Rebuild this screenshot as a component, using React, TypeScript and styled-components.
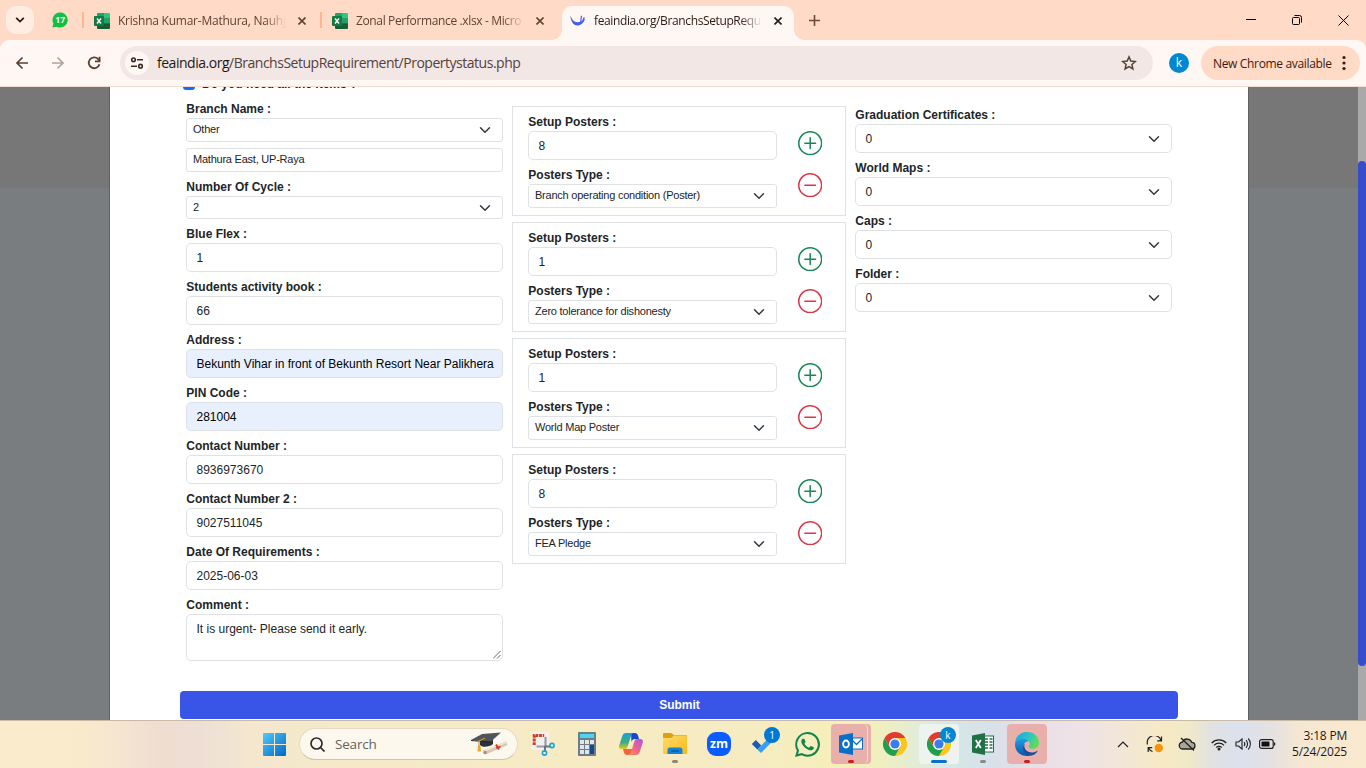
import React from "react";
import styled, { createGlobalStyle } from "styled-components";

const GlobalStyle = createGlobalStyle`
  * { box-sizing: border-box; }
  body { margin: 0; overflow: hidden; background: #fff; }
  svg { display: block; flex: none; }
`;

const ui = `"Open Sans", "Noto Sans", sans-serif`;
const form = `"Liberation Sans", Arial, sans-serif`;

const Screen = styled.div`
  width: 1366px;
  height: 768px;
  display: flex;
  flex-direction: column;
  overflow: hidden;
  font-family: ${ui};
`;

/* ---------- browser tabs ---------- */

const TabStrip = styled.header`
  height: 40px;
  flex: none;
  display: flex;
  background: #ffdac6;
`;

const TabSearch = styled.div`
  width: 28px;
  height: 28px;
  margin: 6px 0 0 6px;
  border-radius: 10px;
  background: #ffede4;
  display: grid;
  place-items: center;
`;

const PinnedTab = styled.div`
  width: 48px;
  height: 40px;
  display: grid;
  place-items: center;
  padding-left: 3px;
`;

const NewTab = styled.div`
  width: 40px;
  height: 40px;
  display: grid;
  place-items: center;
`;

const TabDivider = styled.div`
  width: 2px;
  height: 16px;
  margin-top: 12px;
  background: #ffb68a;
`;

const Tab = styled.div<{ $w: number }>`
  width: ${(p) => p.$w}px;
  height: 40px;
  display: flex;
  align-items: center;
  padding: 1px 0 0 10px;
  color: #5f4335;
`;

const ActiveTab = styled(Tab)`
  position: relative;
  height: 34px;
  margin-top: 6px;
  padding: 0 0 4px 8px;
  border-radius: 10px 10px 0 0;
  background: #fff7f3;
  color: #2b1a12;
  &::before,
  &::after {
    content: "";
    position: absolute;
    bottom: 0;
    width: 10px;
    height: 10px;
  }
  &::before {
    left: -10px;
    background: radial-gradient(circle at 0 0, #ffdac6 9.5px, #fff7f3 10px);
  }
  &::after {
    right: -10px;
    background: radial-gradient(circle at 100% 0, #ffdac6 9.5px, #fff7f3 10px);
  }
`;

const TabTitle = styled.div<{ $ls: number }>`
  width: 168px;
  margin-left: 8px;
  font-size: 12px;
  line-height: 18px;
  letter-spacing: ${(p) => p.$ls}px;
  white-space: nowrap;
  -webkit-mask-image: linear-gradient(90deg, #000 calc(100% - 22px), transparent);
  mask-image: linear-gradient(90deg, #000 calc(100% - 22px), transparent);
`;

const TabClose = styled.div`
  margin-left: 12px;
`;

const WindowButtons = styled.div`
  margin-left: auto;
  display: flex;
`;

const WindowButton = styled.div`
  width: 46px;
  height: 40px;
  display: grid;
  place-items: center;
`;

/* ---------- address bar ---------- */

const ToolbarWrap = styled.div`
  background: #ffdac6;
  flex: none;
`;

const Toolbar = styled.div`
  height: 47px;
  display: flex;
  align-items: center;
  padding-left: 4px;
  background: #fff7f3;
  border-radius: 9px 9px 0 0;
  border-bottom: 1px solid #f3d9ce;
`;

const NavButton = styled.div`
  width: 36px;
  display: grid;
  place-items: center;
`;

const UrlBar = styled.div`
  width: 1033px;
  height: 34px;
  margin-left: 8px;
  border-radius: 17px;
  background: #f2e7e4;
  display: flex;
  align-items: center;
  padding: 0 16px 0 5px;
`;

const SiteInfo = styled.div`
  width: 24px;
  height: 24px;
  border-radius: 12px;
  background: #fff7f3;
  display: grid;
  place-items: center;
`;

const UrlText = styled.div`
  margin-left: 8px;
  flex: 1;
  font-size: 14px;
  line-height: 20px;
  letter-spacing: -0.48px;
  color: #55423b;
  white-space: nowrap;
  b {
    font-weight: 400;
    color: #231914;
  }
`;

const Avatar = styled.div`
  width: 20px;
  height: 20px;
  margin-left: 16px;
  border-radius: 10px;
  background: #0288d1;
  color: #fff;
  font-size: 12px;
  line-height: 20px;
  text-align: center;
`;

const UpdatePill = styled.div`
  width: 159px;
  height: 34px;
  margin-left: 12px;
  padding-left: 12px;
  border-radius: 17px;
  background: #ffdac6;
  color: #3d1b0c;
  display: flex;
  align-items: center;
  font-size: 12px;
  letter-spacing: -0.34px;
  white-space: nowrap;
  svg {
    margin-left: auto;
    margin-right: 14px;
  }
`;

/* ---------- page ---------- */

const Viewport = styled.main`
  height: 633px;
  flex: none;
  display: flex;
  overflow: hidden;
  background: linear-gradient(#777 101px, #797d80 101px);
`;

const Modal = styled.section`
  width: 1140px;
  margin-left: 109px;
  padding: 0 70px;
  background: #fff;
  border: solid #5f6264;
  border-width: 0 1px;
  font-family: ${form};
  color: #212529;
  overflow: hidden;
`;

const ScrollTrack = styled.div`
  width: 8px;
  margin-left: auto;
  padding-top: 74px;
  background: #a9a9a9;
`;

const ScrollThumb = styled.div`
  height: 505px;
  border-radius: 4px;
  background: #364ccd;
`;

const CheckRow = styled.div`
  display: flex;
  align-items: center;
  height: 18px;
  margin: -12px 0 1px 3px;
  font-size: 12px;
  font-weight: 700;
`;

const CheckBox = styled.div`
  width: 12px;
  height: 12px;
  margin-right: 7px;
  border-radius: 3px;
  background: #0d6efd;
`;

const Columns = styled.div`
  display: flex;
  align-items: flex-start;
  height: 597px;
  padding-left: 6px;
`;

const FieldColumn = styled.div<{ $lead?: number }>`
  width: 317px;
  padding-top: ${(p) => p.$lead ?? 0}px;
`;

const Label = styled.div`
  height: 18px;
  margin-top: 6px;
  padding-left: 0.3px;
  font-size: 12px;
  font-weight: 700;
  line-height: 18px;
  white-space: nowrap;
`;

const Control = styled.div<{ $small?: boolean; $h?: number; $filled?: boolean }>`
  height: ${(p) => p.$h ?? (p.$small ? 24 : 29)}px;
  display: flex;
  align-items: center;
  justify-content: space-between;
  padding: 0 11px 0 ${(p) => (p.$small ? 6 : 9.5)}px;
  border: 1px solid #dee2e6;
  border-radius: ${(p) => (p.$small ? 3 : 5)}px;
  background: ${(p) => (p.$filled ? "#e8f0fe" : "#fff")};
  color: ${(p) => (p.$filled ? "#000" : "#212529")};
  font-size: ${(p) => (p.$small ? 11 : 12)}px;
  line-height: 14px;
  letter-spacing: ${(p) => (p.$small ? -0.23 : 0)}px;
  white-space: nowrap;
  overflow: hidden;
`;

const SmallValue = styled.span`
  padding-bottom: 2px;
`;

const Stacked = styled.div`
  margin-top: 6px;
`;

const Comment = styled.div`
  height: 47px;
  display: flex;
  justify-content: space-between;
  padding: 5px 1px 1px 9.5px;
  border: 1px solid #dee2e6;
  border-radius: 5px;
  font-size: 12px;
  line-height: 18px;
  svg {
    align-self: flex-end;
  }
`;

const PosterColumn = styled.div`
  width: 334px;
  margin: 6px 9px 0;
  padding-top: 6px;
  display: flex;
  flex-direction: column;
  gap: 6px;
`;

const PosterCard = styled.div`
  height: 110px;
  display: flex;
  border: 1px solid #dee2e6;
  padding-left: 15px;
`;

const PosterFields = styled.div`
  width: 249px;
`;

const PosterActions = styled.div`
  margin: 24px 0 0 20.7px;
  display: flex;
  flex-direction: column;
  gap: 17.6px;
`;

const Submit = styled.div`
  height: 28px;
  padding-left: 1px;
  border-radius: 4px;
  background: #3855e8;
  color: #fff;
  font-size: 12px;
  font-weight: 700;
  line-height: 28px;
  text-align: center;
`;

/* ---------- taskbar ---------- */

const Taskbar = styled.footer`
  height: 48px;
  flex: none;
  display: flex;
  align-items: center;
  padding: 0 0 1px 252px;
  border-top: 1px solid #c8bba6;
  background: linear-gradient(
    90deg,
    #f9eccb 0, #f9eacb 80px, #f6e6d0 115px, #efddd0 160px, #eedfd5 200px,
    #f4e7cf 250px, #f5e9c9 330px, #f6ebc4 520px, #f6ecc2 760px, #f5efb9 840px,
    #f0efbf 880px, #dfebdc 925px, #d5e7e8 955px, #d8e1e9 990px, #e9dfe6 1040px,
    #efe3e6 1086px, #f3e7d4 1130px, #f6eac4 1165px, #f0e9c9 1190px, #e0e2e2 1212px,
    #dbe1ee 1240px, #e4e1e2 1270px, #f5e7d2 1300px, #f9e9ce 1366px
  );
`;

const Slot = styled.div<{ $tone?: string; $mark?: string; $wide?: boolean }>`
  position: relative;
  flex: none;
  width: 40px;
  height: 40px;
  margin: 0 2px;
  border-radius: 4px;
  background: ${(p) => p.$tone ?? "transparent"};
  display: grid;
  place-items: center;
  &::after {
    content: "";
    display: ${(p) => (p.$mark ? "block" : "none")};
    position: absolute;
    left: ${(p) => (p.$wide ? 12 : 17)}px;
    bottom: 1px;
    width: ${(p) => (p.$wide ? 16 : 6)}px;
    height: 3px;
    border-radius: 2px;
    background: ${(p) => p.$mark};
  }
`;

const StackEdge = styled.div`
  position: absolute;
  right: 3.5px;
  top: 0;
  width: 5px;
  height: 40px;
  border-right: 1.5px solid #f6e2be;
  border-radius: 0 5px 5px 0;
`;

const CountBadge = styled.div<{ $bg: string }>`
  position: absolute;
  top: 3px;
  right: 3px;
  width: 16px;
  height: 16px;
  border-radius: 8px;
  background: ${(p) => p.$bg};
  color: #fff;
  font-size: 10px;
  line-height: 16px;
  text-align: center;
`;

const SearchBox = styled.div`
  flex: none;
  width: 219px;
  height: 32px;
  margin: 0 3px;
  padding: 0 9px 0 10px;
  border: 1px solid #e5dac3;
  border-bottom-color: #cfc3a9;
  border-radius: 16px;
  background: #fdf8ee;
  display: flex;
  align-items: center;
  font-size: 13.5px;
  letter-spacing: -0.2px;
  color: #65625d;
  span {
    flex: 1;
    margin-left: 10px;
  }
`;

const Tray = styled.div`
  margin-left: auto;
  display: flex;
  align-items: center;
  gap: 8px;
`;

const TrayIcon = styled.div<{ $w?: number }>`
  width: ${(p) => p.$w ?? 24}px;
  display: flex;
  justify-content: center;
`;

const Clock = styled.div`
  width: 60px;
  margin-right: 19px;
  font-size: 12px;
  line-height: 16px;
  letter-spacing: -0.2px;
  text-align: right;
  color: #1d1b18;
  white-space: nowrap;
`;

/* ---------- icons ---------- */

const Chevron = () => (
  <svg width="12" height="12" viewBox="0 0 16 16" fill="none" stroke="#343a40" strokeWidth="2" strokeLinecap="round" strokeLinejoin="round">
    <path d="m2 5 6 6 6-6" />
  </svg>
);

const CloseX = ({ c = "#5f4335" }: { c?: string }) => (
  <svg width="8" height="8" viewBox="0 0 8 8" stroke={c} strokeWidth="1.6">
    <path d="M.5.5l7 7M7.5.5l-7 7" />
  </svg>
);

const SheetIcon = () => (
  <svg width="16" height="16" viewBox="0 0 16 16">
    <path d="M4 0h6v5H3V1a1 1 0 0 1 1-1z" fill="#21a366" />
    <path d="M10 0h5a1 1 0 0 1 1 1v4h-6z" fill="#33c481" />
    <path d="M3 5h7v6H3z" fill="#107c41" />
    <path d="M10 5h6v5h-6z" fill="#21a366" />
    <path d="M3 10h13v5a1 1 0 0 1-1 1H4a1 1 0 0 1-1-1z" fill="#185c37" />
    <path d="M10 10h6v1h-6z" fill="#107c41" />
    <rect x="0" y="3" width="10" height="10" rx="1" fill="#107c41" />
    <path d="M3 5.5l4 5M7 5.5l-4 5" stroke="#fff" strokeWidth="1.5" />
  </svg>
);

const CircleSign = ({ plus }: { plus?: boolean }) => (
  <svg width="24.4" height="24.4" viewBox="0 0 16 16" fill={plus ? "#198754" : "#dc3545"}>
    <path d="M8 15A7 7 0 1 1 8 1a7 7 0 0 1 0 14m0 1A8 8 0 1 0 8 0a8 8 0 0 0 0 16" />
    {plus ? (
      <path d="M8 4a.5.5 0 0 1 .5.5v3h3a.5.5 0 0 1 0 1h-3v3a.5.5 0 0 1-1 0v-3h-3a.5.5 0 0 1 0-1h3v-3A.5.5 0 0 1 8 4" />
    ) : (
      <path d="M4 8a.5.5 0 0 1 .5-.5h7a.5.5 0 0 1 0 1h-7A.5.5 0 0 1 4 8" />
    )}
  </svg>
);

const ChromeIcon = () => (
  <svg width="24" height="24" viewBox="0 0 24 24">
    <path d="M12 12V6h10.4A12 12 0 0 1 12 24l5.2-9z" fill="#fcc61c" />
    <path d="M12 12l5.2 3L12 24A12 12 0 0 1 1.6 6l5.2 9z" fill="#20a04a" />
    <path d="M1.6 6A12 12 0 0 1 22.4 6H12L6.8 15z" fill="#e33b2e" />
    <circle cx="12" cy="12" r="6" fill="#fff" />
    <circle cx="12" cy="12" r="4.6" fill="#3b7ded" />
  </svg>
);

const WhatsAppIcon = () => (
  <svg width="25" height="25" viewBox="0 0 24 24" fill="#14834f">
    <path d="M17.5 14.4c-.3-.15-1.76-.87-2.03-.97-.27-.1-.47-.15-.67.15-.2.3-.77.97-.94 1.16-.17.2-.35.22-.65.08-.3-.15-1.25-.46-2.39-1.48-.88-.79-1.48-1.76-1.65-2.06-.17-.3-.02-.46.13-.6.13-.14.3-.35.45-.53.15-.17.2-.3.3-.5.1-.2.05-.37-.03-.52-.07-.15-.67-1.6-.91-2.2-.24-.58-.49-.5-.67-.51h-.57c-.2 0-.52.07-.79.37-.27.3-1.04 1.02-1.04 2.48s1.07 2.88 1.21 3.07c.15.2 2.1 3.2 5.08 4.49.7.3 1.26.49 1.69.63.71.22 1.36.19 1.87.12.57-.09 1.76-.72 2-1.41.25-.7.25-1.29.18-1.42-.07-.12-.27-.2-.57-.35zM12.05 21.8a9.9 9.9 0 0 1-5.03-1.38l-.36-.21-3.74.98 1-3.65-.24-.37A9.86 9.86 0 0 1 12.05 2a9.9 9.9 0 0 1 0 19.8zM12.05 0A11.9 11.9 0 0 0 1.75 17.85L.06 24l6.3-1.65A11.9 11.9 0 1 0 12.05 0z" />
  </svg>
);

const GradCap = () => (
  <svg width="38" height="24" viewBox="0 0 38 24">
    <path d="M10 8v5c2 3 10 2 13-1V6z" fill="#2b3138" />
    <path d="M1 8L12 2l19-1.500L21 9.500z" fill="#50555d" />
    <path d="M1 8l20 1.500v1L1 9z" fill="#23272c" />
    <path d="M15 6L9 9v6" stroke="#d5982b" strokeWidth="1.2" fill="none" />
    <path d="M8 13.500h2.500l.5 6H7.500z" fill="#e8a92f" />
    <path d="M13 18.500L36 9.500l1.500 3.500-22 9.500z" fill="#d8c7b0" />
    <path d="M13 18.500L36 9.500l.8 1.600L14 20z" fill="#eee2d1" />
    <circle cx="15" cy="20.500" r="1.800" fill="#a9907a" />
    <path d="M26 12.500l3 5M26 16l4.500-1.500" stroke="#d2342f" strokeWidth="1.800" />
  </svg>
);

/* ---------- composition ---------- */

const SelectBox = ({ value, small, h }: { value: string; small?: boolean; h?: number }) => (
  <Control $small={small} $h={h}>
    {small ? <SmallValue>{value}</SmallValue> : value}
    <Chevron />
  </Control>
);

const Field = ({ label, value, filled }: { label: string; value: string; filled?: boolean }) => (
  <>
    <Label>{label}</Label>
    <Control $filled={filled}>{value}</Control>
  </>
);

const posters = [
  ["8", "Branch operating condition (Poster)"],
  ["1", "Zero tolerance for dishonesty"],
  ["1", "World Map Poster"],
  ["8", "FEA Pledge"],
];

const extras = ["Graduation Certificates :", "World Maps :", "Caps :", "Folder :"];

export default function App() {
  return (
    <Screen>
      <GlobalStyle />
      <TabStrip>
        <TabSearch>
          <svg width="10" height="6" viewBox="0 0 10 6" fill="none" stroke="#2b1a12" strokeWidth="1.8"><path d="M1.2.8L5 4.6 8.8.8" /></svg>
        </TabSearch>
        <PinnedTab>
          <svg width="16" height="16" viewBox="0 0 16 16">
            <path d="M.4 15.6l1-4A7.6 7.6 0 1 1 4.500 14.700z" fill="#0cc143" />
            <text x="8.2" y="11.200" textAnchor="middle" fontFamily="Open Sans" fontSize="8.500" fontWeight="700" fill="#fff">17</text>
          </svg>
        </PinnedTab>
        <TabDivider />
        <Tab $w={236}>
          <SheetIcon />
          <TabTitle $ls={-0.24}>Krishna Kumar-Mathura, Nauhjh</TabTitle>
          <TabClose><CloseX /></TabClose>
        </Tab>
        <TabDivider />
        <Tab $w={240}>
          <SheetIcon />
          <TabTitle $ls={-0.36}>Zonal Performance .xlsx - Micro</TabTitle>
          <TabClose><CloseX /></TabClose>
        </Tab>
        <ActiveTab $w={232}>
          <svg width="16" height="16" viewBox="0 0 16 16">
            <path d="M.3 2.500C2 6.800 4 9 7.300 9.200c3.200 0 5.500-1.600 8.200-3.700-2 4.500-4.700 7-8.200 7C3.500 12.500.8 8.500.3 2.500z" fill="#4460ee" />
            <path d="M11.500 2.800l-.8 6.500M14.300 4.200l-2 4.500" stroke="#4460ee" strokeWidth="1.200" />
          </svg>
          <TabTitle $ls={-0.38}>feaindia.org/BranchsSetupRequi</TabTitle>
          <TabClose><CloseX c="#2b1a12" /></TabClose>
        </ActiveTab>
        <NewTab>
          <svg width="11" height="11" viewBox="0 0 11 11" stroke="#6b4a3a" strokeWidth="1.600"><path d="M0 5.500h11M5.500 0v11" /></svg>
        </NewTab>
        <WindowButtons>
          <WindowButton><svg width="10" height="10" viewBox="0 0 10 10" stroke="#000"><path d="M0 4.500h10" /></svg></WindowButton>
          <WindowButton>
            <svg width="10" height="10" viewBox="0 0 10 10" fill="none" stroke="#000"><rect x=".5" y="2.500" width="7" height="7" rx="1" /><path d="M2.500.5h5a2 2 0 0 1 2 2v5" /></svg>
          </WindowButton>
          <WindowButton><svg width="11" height="11" viewBox="0 0 11 11" stroke="#000"><path d="M.5.5l10 10M10.500.5l-10 10" /></svg></WindowButton>
        </WindowButtons>
      </TabStrip>

      <ToolbarWrap>
        <Toolbar>
          <NavButton>
            <svg width="16" height="16" viewBox="0 0 16 16" fill="none" stroke="#5b4034" strokeWidth="1.700"><path d="M14 8H3M8.500 2.500L3 8l5.500 5.500" /></svg>
          </NavButton>
          <NavButton>
            <svg width="16" height="16" viewBox="0 0 16 16" fill="none" stroke="#b3a39b" strokeWidth="1.700"><path d="M2 8h11M7.500 2.500L13 8l-5.500 5.500" /></svg>
          </NavButton>
          <NavButton>
            <svg width="16" height="16" viewBox="0 0 16 16" fill="none" stroke="#5b4034" strokeWidth="1.800"><path d="M13.400 9.200A5.400 5.400 0 1 1 12.200 4.200L13.600 5.700" /><path d="M13.600 1.700v4.600H9" /></svg>
          </NavButton>
          <UrlBar>
            <SiteInfo>
              <svg width="14" height="12" viewBox="0 0 14 12" fill="none" stroke="#3b2a22" strokeWidth="1.600"><circle cx="3.500" cy="2.800" r="1.800" /><path d="M7 2.800h6M1 9.200h6" /><circle cx="10.500" cy="9.200" r="1.800" /></svg>
            </SiteInfo>
            <UrlText><b>feaindia.org</b>/BranchsSetupRequirement/Propertystatus.php</UrlText>
            <svg width="16" height="16" viewBox="0 0 16 16" fill="none" stroke="#55423b" strokeWidth="1.500"><path d="M8 1.900l1.800 4.200 4.500.4-3.400 3 1 4.500L8 11.600 4.100 14l1-4.500-3.400-3 4.500-.4z" /></svg>
          </UrlBar>
          <Avatar>k</Avatar>
          <UpdatePill>
            New Chrome available
            <svg width="4" height="16" viewBox="0 0 4 16" fill="#3d1b0c"><circle cx="2" cy="2.500" r="1.600" /><circle cx="2" cy="8" r="1.600" /><circle cx="2" cy="13.500" r="1.600" /></svg>
          </UpdatePill>
        </Toolbar>
      </ToolbarWrap>

      <Viewport>
        <Modal>
          <CheckRow><CheckBox />Do you need all the items ?</CheckRow>
          <Columns>
            <FieldColumn>
              <Label>Branch Name :</Label>
              <SelectBox small value="Other" />
              <Stacked><Control $small><SmallValue>Mathura East, UP-Raya</SmallValue></Control></Stacked>
              <Label>Number Of Cycle :</Label>
              <SelectBox small h={23} value="2" />
              <Field label="Blue Flex :" value="1" />
              <Field label="Students activity book :" value="66" />
              <Field label="Address :" value="Bekunth Vihar in front of Bekunth Resort Near Palikhera" filled />
              <Field label="PIN Code :" value="281004" filled />
              <Field label="Contact Number :" value="8936973670" />
              <Field label="Contact Number 2 :" value="9027511045" />
              <Field label="Date Of Requirements :" value="2025-06-03" />
              <Label>Comment :</Label>
              <Comment>
                It is urgent- Please send it early.
                <svg width="8" height="8" viewBox="0 0 8 8" stroke="#555" strokeWidth=".9"><path d="M0 7.500L7.500 0M4 7.500L7.500 4" /></svg>
              </Comment>
            </FieldColumn>
            <PosterColumn>
              {posters.map(([count, type], i) => (
                <PosterCard key={i}>
                  <PosterFields>
                    <Label>Setup Posters :</Label>
                    <Control>{count}</Control>
                    <Label>Posters Type :</Label>
                    <SelectBox small value={type} />
                  </PosterFields>
                  <PosterActions>
                    <CircleSign plus />
                    <CircleSign />
                  </PosterActions>
                </PosterCard>
              ))}
            </PosterColumn>
            <FieldColumn $lead={6}>
              {extras.map((label) => (
                <React.Fragment key={label}>
                  <Label>{label}</Label>
                  <SelectBox value="0" />
                </React.Fragment>
              ))}
            </FieldColumn>
          </Columns>
          <Submit>Submit</Submit>
        </Modal>
        <ScrollTrack><ScrollThumb /></ScrollTrack>
      </Viewport>

      <Taskbar>
        <Slot>
          <svg width="23" height="23" viewBox="0 0 23 23">
            <defs><linearGradient id="win" x1="0" y1="0" x2="1" y2="1"><stop offset="0" stopColor="#4fcbfa" /><stop offset="1" stopColor="#0067c8" /></linearGradient></defs>
            <path d="M1 0h10v11H0V1a1 1 0 0 1 1-1zM12 0h10a1 1 0 0 1 1 1v10H12zM0 12h11v11H1a1 1 0 0 1-1-1zM12 12h11v10a1 1 0 0 1-1 1H12z" fill="url(#win)" />
          </svg>
        </Slot>
        <SearchBox>
          <svg width="15" height="15" viewBox="0 0 15 15" fill="none" stroke="#2c2c2c" strokeWidth="1.700"><circle cx="6.500" cy="6.500" r="5.500" /><path d="M10.500 10.500l4 4" /></svg>
          <span>Search</span>
          <GradCap />
        </SearchBox>
        <Slot>
          <svg width="24" height="24" viewBox="0 0 24 24" fill="none">
            <rect x="0" y="0" width="18" height="18" rx="2" fill="#f3f1f0" />
            <path d="M3.200 13V3.500h10" stroke="#d63c1e" strokeWidth="3" strokeDasharray="2.800 .8" />
            <path d="M14.500 5v9.500H5.500" stroke="#9a9ea4" strokeWidth="2.200" />
            <path d="M14 14v6M13.500 14.500h5.500" stroke="#6e737a" strokeWidth="2" />
            <circle cx="21" cy="13.500" r="2.100" stroke="#1ba4e0" strokeWidth="1.600" /><circle cx="13.500" cy="21" r="2.100" stroke="#1ba4e0" strokeWidth="1.600" />
          </svg>
        </Slot>
        <Slot>
          <svg width="18" height="24" viewBox="0 0 18 24">
            <rect width="18" height="24" rx="1" fill="#6f7b86" /><rect x="2" y="2" width="14" height="4" fill="#4bd5ee" />
            <g fill="#dfe5e9"><rect x="2" y="8" width="4" height="4" /><rect x="7" y="8" width="4" height="4" /><rect x="12" y="8" width="4" height="4" /><rect x="2" y="13" width="4" height="4" /><rect x="7" y="13" width="4" height="4" /><rect x="2" y="18" width="4" height="4" /><rect x="7" y="18" width="4" height="4" /></g>
            <rect x="12" y="13" width="4" height="9" fill="#0d4a8f" />
          </svg>
        </Slot>
        <Slot>
          <svg width="24" height="22" viewBox="0 0 24 22">
            <defs>
              <linearGradient id="cpa" x1="0" y1="0" x2="0" y2="1"><stop offset="0" stopColor="#1b9de2" /><stop offset=".6" stopColor="#3fae7c" /><stop offset="1" stopColor="#edc520" /></linearGradient>
              <linearGradient id="cpb" x1="1" y1="0" x2="0" y2="1"><stop offset="0" stopColor="#a45be8" /><stop offset=".5" stopColor="#ee5f8f" /><stop offset="1" stopColor="#fb9a4b" /></linearGradient>
            </defs>
            <path d="M12 0h4c1.500 0 2.500 1 3 2.500L20 6h-4c-2 0-3 1-3.500 3z" fill="#1a48c8" />
            <path d="M8 22h4l1.500-6H4l1 3.500C5.500 21 6.500 22 8 22z" fill="#f0653b" />
            <path d="M7 0h8c-2 0-2.600 1.500-3.200 3.500L8.500 14C8 15.500 7 16 5.500 16H2.600C.5 16-.4 14.500.2 12.500L3.300 3C4 1 5 0 7 0z" fill="url(#cpa)" />
            <path d="M17 22H9c2 0 2.600-1.500 3.200-3.500L15.500 8C16 6.500 17 6 18.500 6h2.900c2.100 0 3 1.500 2.400 3.500L20.700 19c-.7 2-1.700 3-3.700 3z" fill="url(#cpb)" />
          </svg>
        </Slot>
        <Slot $mark="#8f886f">
          <svg width="24" height="22" viewBox="0 0 24 22">
            <defs><linearGradient id="fold" x1="0" y1="0" x2="1" y2="1"><stop offset="0" stopColor="#ffdc6a" /><stop offset="1" stopColor="#f9b917" /></linearGradient></defs>
            <path d="M0 1a1 1 0 0 1 1-1h7l3 2h12a1 1 0 0 1 1 1v6H0z" fill="#dba014" />
            <path d="M0 5h8l3-2.500h12a1 1 0 0 1 1 1V20a1 1 0 0 1-1 1H1a1 1 0 0 1-1-1z" fill="url(#fold)" />
            <path d="M4.500 21v-4A2.500 2.500 0 0 1 7 14.500h10a2.500 2.500 0 0 1 2.500 2.500v4z" fill="#1583d3" /><path d="M8 18h8" stroke="#0a5ba5" strokeWidth="1.500" />
          </svg>
        </Slot>
        <Slot>
          <svg width="24" height="24" viewBox="0 0 24 24">
            <rect width="24" height="24" rx="9" fill="#0b5cff" /><text x="12" y="16" textAnchor="middle" fontFamily="Open Sans" fontWeight="700" fontSize="12" textLength="18" lengthAdjust="spacingAndGlyphs" fill="#fff">zm</text>
          </svg>
        </Slot>
        <Slot>
          <svg width="24" height="18" viewBox="0 0 24 18"><path d="M.8 9l4-4 5.500 5.500-4 4z" fill="#1b5bb5" /><path d="M6.300 14.500L19.500 1l3.800 3.600L10 18z" fill="#3a9fec" /></svg>
          <CountBadge $bg="#0078d4">1</CountBadge>
        </Slot>
        <Slot><WhatsAppIcon /></Slot>
        <Slot $tone="#e9afaa" $mark="#c8201c">
          <StackEdge />
          <svg width="24" height="22" viewBox="0 0 24 22">
            <rect x="11" y="5" width="12.500" height="11" fill="#fff" stroke="#0f6fc6" /><path d="M12 6l5.500 5.500L23 6" fill="none" stroke="#0f6fc6" strokeWidth="1.300" />
            <path d="M0 2.500L14 0v22L0 19.500z" fill="#0a6fc9" /><ellipse cx="7" cy="11" rx="2.900" ry="3.500" fill="none" stroke="#fff" strokeWidth="1.900" />
          </svg>
        </Slot>
        <Slot><ChromeIcon /></Slot>
        <Slot $tone="#eff3f0" $mark="#0672d0" $wide>
          <ChromeIcon />
          <CountBadge $bg="#0288d1">k</CountBadge>
        </Slot>
        <Slot $mark="#888b8c">
          <svg width="22" height="22" viewBox="0 0 22 22">
            <rect x="11" y="3" width="10.500" height="16" fill="#fff" stroke="#1e7145" /><path d="M13 6h3M17.500 6h3M13 9h3M17.500 9h3M13 12h3M17.500 12h3M13 15h3M17.500 15h3" stroke="#1e7145" strokeWidth="1.500" />
            <path d="M0 2.500L13 0v22L0 19.500z" fill="#1e7145" /><path d="M3.800 7l5 8M8.800 7l-5 8" stroke="#fff" strokeWidth="1.800" />
          </svg>
        </Slot>
        <Slot $tone="#e9afaa" $mark="#c8201c">
          <svg width="24" height="24" viewBox="0 0 24 24">
            <defs>
              <linearGradient id="edgeA" x1="0" y1="0" x2="1" y2=".4"><stop offset="0" stopColor="#1aa4e4" /><stop offset=".6" stopColor="#2ac5c8" /><stop offset="1" stopColor="#60db57" /></linearGradient>
              <linearGradient id="edgeB" x1="0" y1="0" x2="0" y2="1"><stop offset="0" stopColor="#1da0e2" /><stop offset="1" stopColor="#0c53ab" /></linearGradient>
            </defs>
            <path d="M.2 10C1 4 6 0 12 0c7 0 12 5 12 10.500 0 4-3 6.300-6.300 6.300-2.500 0-4-1-4-2 0-.8 1-1.100 1-3C14.700 9 12 7 8.500 7 4.500 7 1 9 .2 12z" fill="url(#edgeA)" />
            <path d="M0 12.500C.2 9 4 6.800 8.500 6.800c2.500 0 4.600 1 5.600 2.600-3.500-.4-5.400 2.300-5.400 5.100 0 4 3.500 7.500 8 8-1.500 1-3 1.500-4.700 1.500C5 24 0 19 0 12.500z" fill="url(#edgeB)" />
            <path d="M9.800 11.500c-2 5 2.500 9.500 8 9 1.500-.2 3-.8 4.200-1.500.4-.2.700.2.500.5C20.500 22 18 24 15 23.600 9 23 6 16 9.800 11.500z" fill="#174f99" />
          </svg>
        </Slot>
        <Tray>
          <TrayIcon><svg width="12" height="7" viewBox="0 0 12 7" fill="none" stroke="#222" strokeWidth="1.200"><path d="M1 6l5-5 5 5" /></svg></TrayIcon>
          <TrayIcon>
            <svg width="18" height="17" viewBox="0 0 18 17" fill="none" stroke="#222" strokeWidth="1.200">
              <path d="M1.500 8.500A7 7 0 0 1 15 4.500M15.500.5v4.300h-4.300M6.500 15.500A7 7 0 0 1 2.500 12M2.200 16v-4.300h4" /><circle cx="12.800" cy="12" r="4.200" fill="#f7940b" stroke="none" />
            </svg>
          </TrayIcon>
          <TrayIcon>
            <svg width="18" height="14" viewBox="0 0 18 14" fill="none" stroke="#222" strokeWidth="1.300"><path d="M5 12h8.500a3.300 3.300 0 0 0 .3-6.600A5 5 0 0 0 4.500 5 3.500 3.500 0 0 0 5 12z" fill="#aaa69a" /><path d="M3 1l13 12.500" /></svg>
          </TrayIcon>
          <TrayIcon>
            <svg width="16" height="13" viewBox="0 0 16 13" fill="none" stroke="#222" strokeWidth="1.200"><path d="M.7 5a10.300 10.300 0 0 1 14.600 0M3 7.300a7 7 0 0 1 10 0M5.300 9.500a3.800 3.800 0 0 1 5.400 0" /><circle cx="8" cy="11" r="1.500" fill="#222" stroke="none" /></svg>
          </TrayIcon>
          <TrayIcon $w={8}>
            <svg width="17" height="14" viewBox="0 0 17 14" fill="none" stroke="#222" strokeWidth="1.100"><path d="M1 5v4h2.500L7 12V2L3.500 5zM9 5a3 3 0 0 1 0 4M11 3.200a5.500 5.500 0 0 1 0 7.600M13.200 1.500a8 8 0 0 1 0 11" /></svg>
          </TrayIcon>
          <TrayIcon>
            <svg width="17" height="10" viewBox="0 0 17 10" fill="none" stroke="#222" strokeWidth="1.200"><rect x=".6" y=".6" width="13.600" height="8.800" rx="2" /><rect x="2.500" y="2.500" width="8" height="5" rx=".5" fill="#111" stroke="none" /><path d="M15.600 3.500v3" /></svg>
          </TrayIcon>
          <Clock>3:18 PM<br />5/24/2025</Clock>
        </Tray>
      </Taskbar>
    </Screen>
  );
}
